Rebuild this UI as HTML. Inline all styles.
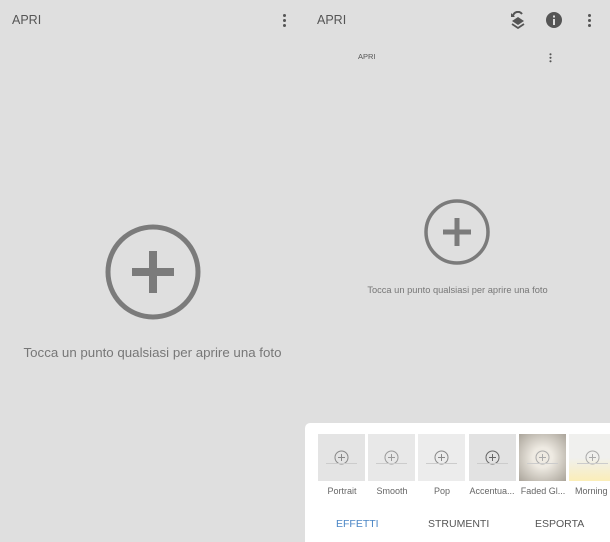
<!DOCTYPE html>
<html><head><meta charset="utf-8"><style>
*{margin:0;padding:0;box-sizing:border-box}
body{width:610px;height:542px;background:#dfdfdf;position:relative;overflow:hidden;font-family:"Liberation Sans",sans-serif;color:#555}
.a{position:absolute}
.dots{position:absolute;width:3px}
.dots i{display:block;width:3px;height:3px;border-radius:50%;background:#555;margin-bottom:2px}
.th{position:absolute;top:434px;width:47px;height:47px;background:#e4e4e4}
.th svg{position:absolute;left:16px;top:16px}
.th b{position:absolute;left:8px;right:8px;top:29px;height:1px;background:#ccc}
.lb{position:absolute;top:486px;width:50px;text-align:center;font-size:9px;color:#666}
.tab{position:absolute;top:518px;font-size:10.5px;color:#555}
</style></head><body>
<div class="a" style="left:12px;top:13px;font-size:12.5px;color:#555">APRI</div>
<div class="dots" style="left:283px;top:14px"><i></i><i></i><i></i></div>
<svg class="a" style="left:105px;top:224px" width="96" height="96"><circle cx="48" cy="48" r="45" fill="none" stroke="#7b7b7b" stroke-width="5"/><rect x="44" y="27" width="8" height="42" fill="#7b7b7b"/><rect x="27" y="44" width="42" height="8" fill="#7b7b7b"/></svg>
<div class="a" style="left:0;width:305px;top:345px;text-align:center;font-size:13.3px;color:#777">Tocca un punto qualsiasi per aprire una foto</div>

<div class="a" style="left:317px;top:13px;font-size:12.5px;color:#555">APRI</div>
<svg class="a" style="left:510px;top:11px" width="16" height="18"><path d="M3 5a5 5 0 0 1 9-2" fill="none" stroke="#555" stroke-width="2"/><path d="M1 2v4h4z" fill="#555"/><path d="M8 6l6 4-6 4-6-4z" fill="#555"/><path d="M2 13l6 4 6-4" fill="none" stroke="#555" stroke-width="1.8"/></svg>
<svg class="a" style="left:546px;top:12px" width="16" height="16"><circle cx="8" cy="8" r="8" fill="#555"/><rect x="7" y="7" width="2" height="6" fill="#dfdfdf"/><rect x="7" y="3.5" width="2" height="2" fill="#dfdfdf"/></svg>
<div class="dots" style="left:588px;top:14px"><i></i><i></i><i></i></div>
<div class="a" style="left:358px;top:52px;font-size:7.5px;color:#555">APRI</div>
<div class="dots" style="left:549px;top:51px;transform:scale(.7)"><i></i><i></i><i></i></div>
<svg class="a" style="left:424px;top:199px" width="66" height="66"><circle cx="33" cy="33" r="31" fill="none" stroke="#7b7b7b" stroke-width="3.5"/><rect x="30.5" y="19" width="5" height="28" fill="#7b7b7b"/><rect x="19" y="30.5" width="28" height="5" fill="#7b7b7b"/></svg>
<div class="a" style="left:305px;width:305px;top:285px;text-align:center;font-size:9.3px;color:#777">Tocca un punto qualsiasi per aprire una foto</div>

<div class="a" style="left:305px;top:423px;width:305px;height:119px;background:#fff;border-top-left-radius:5px"></div>
<div class="th" style="left:318px"><svg width="15" height="15"><circle cx="7.5" cy="7.5" r="6.5" fill="none" stroke="#888" stroke-width="1"/><path d="M7.5 4v7M4 7.5h7" stroke="#888" stroke-width="1"/></svg><b></b></div>
<div class="th" style="left:368px;background:#e8e8e8"><svg width="15" height="15"><circle cx="7.5" cy="7.5" r="6.5" fill="none" stroke="#999" stroke-width="1"/><path d="M7.5 4v7M4 7.5h7" stroke="#999" stroke-width="1"/></svg><b></b></div>
<div class="th" style="left:418px;background:#ececec"><svg width="15" height="15"><circle cx="7.5" cy="7.5" r="6.5" fill="none" stroke="#888" stroke-width="1"/><path d="M7.5 4v7M4 7.5h7" stroke="#888" stroke-width="1"/></svg><b></b></div>
<div class="th" style="left:469px;background:#e2e2e2"><svg width="15" height="15"><circle cx="7.5" cy="7.5" r="6.5" fill="none" stroke="#666" stroke-width="1"/><path d="M7.5 4v7M4 7.5h7" stroke="#666" stroke-width="1"/></svg><b></b></div>
<div class="th" style="left:519px;background:radial-gradient(circle,#eeeae2 30%,#aaa49a 100%)"><svg width="15" height="15"><circle cx="7.5" cy="7.5" r="6.5" fill="none" stroke="#aaa" stroke-width="1"/><path d="M7.5 4v7M4 7.5h7" stroke="#aaa" stroke-width="1"/></svg><b></b></div>
<div class="th" style="left:569px;background:linear-gradient(#f0f0ee 50%,#fbeeb8)"><svg width="15" height="15"><circle cx="7.5" cy="7.5" r="6.5" fill="none" stroke="#aaa" stroke-width="1"/><path d="M7.5 4v7M4 7.5h7" stroke="#aaa" stroke-width="1"/></svg><b></b></div>
<div class="lb" style="left:317px">Portrait</div>
<div class="lb" style="left:367px">Smooth</div>
<div class="lb" style="left:417px">Pop</div>
<div class="lb" style="left:467px">Accentua...</div>
<div class="lb" style="left:518px">Faded Gl...</div>
<div class="lb" style="left:568px;text-align:left;padding-left:7px;width:60px">Morning</div>
<div class="tab" style="left:336px;color:#4a86c5">EFFETTI</div>
<div class="tab" style="left:428px">STRUMENTI</div>
<div class="tab" style="left:535px">ESPORTA</div>
</body></html>
